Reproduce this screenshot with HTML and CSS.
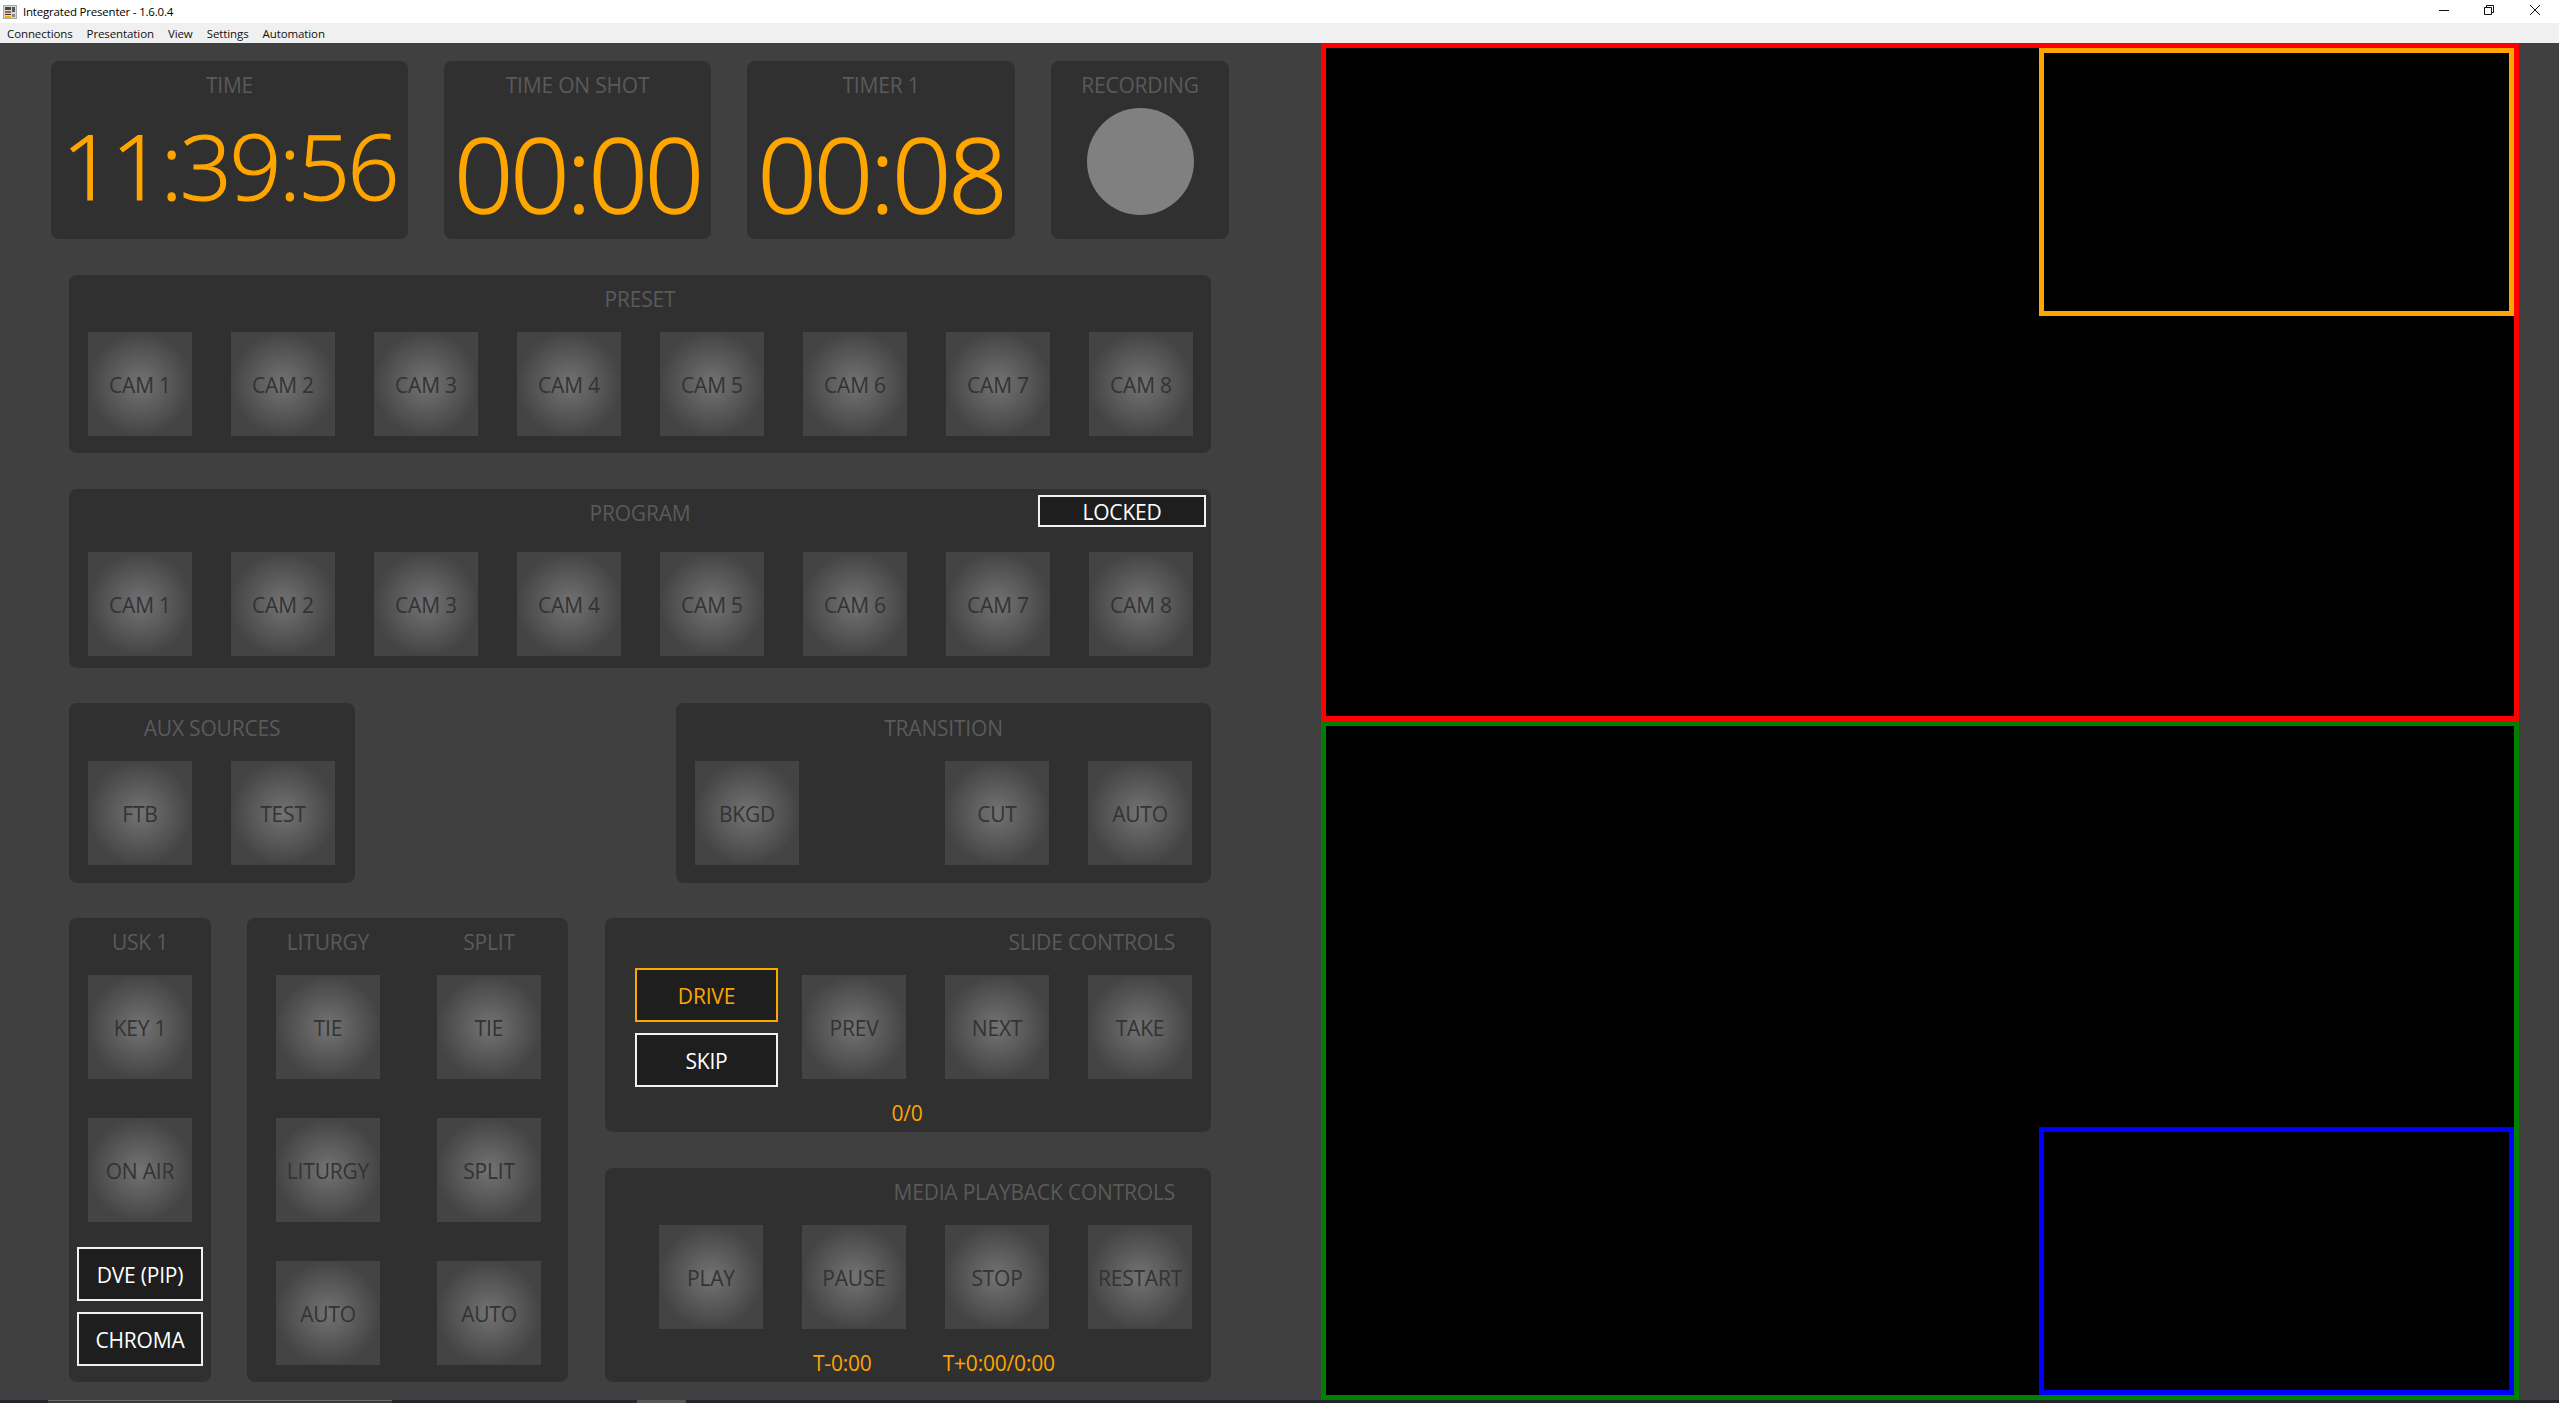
FILE: index.html
```html
<!DOCTYPE html>
<html lang="en">
<head>
<meta charset="utf-8">
<title>Integrated Presenter - 1.6.0.4</title>
<link rel="stylesheet" href="styles.css">
</head>
<body>
<header class="titlebar">
  <svg class="app-icon" width="14" height="14" viewBox="0 0 14 14">
    <rect width="14" height="14" fill="#a8a8a8"/>
    <rect x="1" y="1" width="12" height="12" fill="#d8d8d8"/>
    <rect x="2" y="2" width="6" height="3" fill="#4a4a4a"/>
    <rect x="9" y="2" width="3" height="5" fill="#555"/>
    <rect x="2" y="6" width="6" height="2" fill="#b5533c"/>
    <rect x="2" y="9" width="6" height="1" fill="#333"/>
    <rect x="2" y="11" width="6" height="2" fill="#f0b400"/>
    <rect x="9" y="9" width="3" height="3" fill="#888"/>
  </svg>
  <span class="app-title">Integrated Presenter - 1.6.0.4</span>
  <div class="win-controls">
    <svg width="10" height="10" viewBox="0 0 10 10"><path d="M0 5.5H10" stroke="#111" fill="none"/></svg>
    <svg width="10" height="10" viewBox="0 0 10 10"><path d="M.5 2.5h7v7h-7zM2.5 2.5V.5h7v7h-2" stroke="#111" fill="none"/></svg>
    <svg width="10" height="10" viewBox="0 0 10 10"><path d="M0 0L10 10M10 0L0 10" stroke="#111" fill="none"/></svg>
  </div>
</header>
<nav class="menubar">
  <span>Connections</span><span>Presentation</span><span>View</span><span>Settings</span><span>Automation</span>
</nav>
<main class="main">
  <section class="controls">
    <div class="clocks">
      <div class="panel clock clock-time"><div class="label">TIME</div><div class="digits digits-time">11:39:56</div></div>
      <div class="panel clock clock-shot"><div class="label">TIME ON SHOT</div><div class="digits">00:00</div></div>
      <div class="panel clock clock-timer"><div class="label">TIMER 1</div><div class="digits">00:08</div></div>
      <div class="panel clock clock-rec"><div class="label">RECORDING</div><div class="rec-dot"></div></div>
    </div>

    <div class="panel bus bus-preset">
      <div class="label head">PRESET</div>
      <div class="row">
        <div class="btn">CAM 1</div><div class="btn">CAM 2</div><div class="btn">CAM 3</div><div class="btn">CAM 4</div>
        <div class="btn">CAM 5</div><div class="btn">CAM 6</div><div class="btn">CAM 7</div><div class="btn">CAM 8</div>
      </div>
    </div>

    <div class="panel bus bus-program">
      <div class="label head head-program">PROGRAM</div>
      <div class="toggle locked">LOCKED</div>
      <div class="row">
        <div class="btn">CAM 1</div><div class="btn">CAM 2</div><div class="btn">CAM 3</div><div class="btn">CAM 4</div>
        <div class="btn">CAM 5</div><div class="btn">CAM 6</div><div class="btn">CAM 7</div><div class="btn">CAM 8</div>
      </div>
    </div>

    <div class="mid">
      <div class="panel aux">
        <div class="label head">AUX SOURCES</div>
        <div class="row"><div class="btn">FTB</div><div class="btn">TEST</div></div>
      </div>
      <div class="panel transition">
        <div class="label head">TRANSITION</div>
        <div class="row"><div class="btn bkgd">BKGD</div><div class="btn">CUT</div><div class="btn">AUTO</div></div>
      </div>
    </div>

    <div class="lower">
      <div class="panel usk">
        <div class="label head">USK 1</div>
        <div class="btn">KEY 1</div>
        <div class="btn">ON AIR</div>
        <div class="toggle usk-dve">DVE (PIP)</div>
        <div class="toggle usk-chroma">CHROMA</div>
      </div>
      <div class="panel keys">
        <div class="key-col">
          <div class="label head">LITURGY</div>
          <div class="btn">TIE</div>
          <div class="btn">LITURGY</div>
          <div class="btn">AUTO</div>
        </div>
        <div class="key-col">
          <div class="label head">SPLIT</div>
          <div class="btn">TIE</div>
          <div class="btn">SPLIT</div>
          <div class="btn">AUTO</div>
        </div>
      </div>
      <div class="stack">
        <div class="panel slides">
          <div class="label head-right">SLIDE CONTROLS</div>
          <div class="slides-body">
            <div class="slide-modes">
              <div class="toggle mode drive">DRIVE</div>
              <div class="toggle mode">SKIP</div>
            </div>
            <div class="btn">PREV</div><div class="btn">NEXT</div><div class="btn">TAKE</div>
          </div>
          <div class="readout slide-count">0/0</div>
        </div>
        <div class="panel media">
          <div class="label head-right">MEDIA PLAYBACK CONTROLS</div>
          <div class="media-body">
            <div class="btn">PLAY</div><div class="btn">PAUSE</div><div class="btn">STOP</div><div class="btn">RESTART</div>
          </div>
          <div class="media-times">
            <span class="readout t-minus">T-0:00</span>
            <span class="readout t-plus">T+0:00/0:00</span>
          </div>
        </div>
      </div>
    </div>
  </section>

  <section class="previews">
    <div class="preview preview-red"><div class="pip pip-orange"></div></div>
    <div class="preview preview-green"><div class="pip pip-blue"></div></div>
  </section>
</main>
<footer class="strip">
  <div class="strip-tab"></div>
  <div class="strip-thumb"></div>
</footer>
</body>
</html>
```

FILE: styles.css
```css
* { box-sizing: border-box; }
html, body { margin: 0; height: 100%; }
body {
  width: 2559px;
  height: 1403px;
  overflow: hidden;
  display: flex;
  flex-direction: column;
  background: #404040;
  font-family: "Open Sans", "Noto Sans", sans-serif;
}

/* window chrome */
.titlebar {
  height: 23px;
  background: #fff;
  display: flex;
  align-items: center;
  padding-left: 3px;
  color: #000;
}
.app-icon { margin-right: 6px; }
.app-title { font-size: 11.5px; letter-spacing: -0.2px; }
.win-controls {
  margin-left: auto;
  align-self: flex-start;
  display: flex;
  gap: 35px;
  padding: 5px 19px 0 0;
}
.win-controls svg:last-child { margin-left: 1px; }
.menubar {
  height: 20px;
  background: #f0f0f0;
  display: flex;
  align-items: center;
  gap: 14px;
  padding-left: 7px;
  font-size: 11.5px;
  letter-spacing: -0.1px;
  color: #111;
}

/* main */
.main { height: 1357px; display: flex; }
.controls { width: 1321px; flex: none; }

.panel { background: #303030; border-radius: 8px; }
.label {
  color: #5a5a5a;
  font-size: 21px;
  letter-spacing: -0.2px;
  text-align: center;
  white-space: nowrap;
}

/* clocks */
.clocks { display: flex; gap: 36px; margin: 18px 0 0 51px; }
.clock { height: 178px; padding-top: 7px; display: flex; flex-direction: column; align-items: center; }
.clock .label { line-height: 34px; }
.clock-time { width: 357px; }
.clock-shot { width: 267px; }
.clock-timer { width: 268px; }
.clock-rec { width: 178px; }
.digits {
  color: #ffa500;
  font-weight: 300;
  -webkit-text-stroke: 1.6px #ffa500;
  font-size: 104px;
  line-height: 100px;
  letter-spacing: -3px;
  margin-top: 21px;
  white-space: nowrap;
}
.digits-time { font-size: 91px; letter-spacing: -2.5px; margin-top: 13px; -webkit-text-stroke-width: 1.2px; }
.rec-dot { width: 107px; height: 107px; border-radius: 50%; background: #808080; margin-top: 6px; }

/* shared button */
.btn {
  flex: none;
  width: 104px;
  height: 104px;
  padding-top: 2px;
  display: flex;
  align-items: center;
  justify-content: center;
  background: radial-gradient(circle closest-side, #737373 0%, #444 100%);
  color: #333;
  font-size: 21px;
  letter-spacing: -0.2px;
  white-space: nowrap;
}
.toggle {
  display: flex;
  align-items: center;
  justify-content: center;
  padding-top: 1px;
  background: #1e1e1e;
  border: 2px solid #f0f0f0;
  color: #fff;
  font-size: 21px;
  letter-spacing: -0.2px;
}

/* buses */
.bus { position: relative; margin-left: 69px; width: 1142px; padding: 0 19px; }
.head { line-height: 48px; height: 57px; }
.row { display: flex; gap: 39px; }
.bus-preset { margin-top: 36px; height: 178px; }
.bus-program { margin-top: 36px; height: 179px; }
.head-program { height: 63px; }
.locked { position: absolute; top: 6px; right: 5px; width: 168px; height: 32px; }

/* aux & transition */
.mid { display: flex; justify-content: space-between; margin: 35px 0 0 69px; width: 1142px; }
.aux, .transition { height: 180px; padding: 0 19px; }
.aux { width: 286px; }
.transition { width: 535px; }
.bkgd { margin-right: auto; }
.mid .head { line-height: 50px; height: 58px; }

/* lower */
.lower { display: flex; height: 464px; margin: 35px 0 0 69px; width: 1142px; }
.usk {
  width: 142px;
  display: flex;
  flex-direction: column;
  align-items: center;
}
.usk .head { width: 100%; }
.usk .btn + .btn { margin-top: 39px; }
.usk-dve, .usk-chroma { width: 126px; height: 54px; }
.usk-dve { margin-top: 25px; }
.usk-chroma { margin-top: 11px; }

.keys {
  width: 321px;
  margin-left: 36px;
  padding: 0 28px 0 29px;
  display: flex;
  gap: 57px;
}
.key-col { width: 104px; display: flex; flex-direction: column; }
.key-col .btn + .btn { margin-top: 39px; }

.stack { width: 606px; margin-left: 37px; display: flex; flex-direction: column; justify-content: space-between; }
.head-right { text-align: right; padding-right: 36px; line-height: 48px; height: 57px; }

.slides { height: 214px; position: relative; }
.slides-body { display: flex; gap: 39px; padding-left: 197px; }
.slide-modes {
  position: absolute;
  left: 30px;
  top: 50px;
  display: flex;
  flex-direction: column;
  gap: 11px;
}
.mode { width: 143px; height: 54px; }
.drive { border-color: #ffa500; color: #ffa500; }
.readout { color: #ffa500; font-size: 21px; letter-spacing: -0.2px; }
.slide-count { text-align: center; line-height: 24px; margin: 22px 0 0 -2px; }

.media { height: 214px; }
.media-body { display: flex; gap: 39px; padding-left: 54px; }
.media-times { display: flex; margin-top: 22px; line-height: 24px; }
.t-minus { margin-left: 208px; }
.t-plus { margin-left: 71px; }

/* previews */
.previews { width: 1198px; flex: none; }
.preview {
  background: #000;
  border: 5px solid;
  display: flex;
  justify-content: flex-end;
  align-items: flex-start;
}
.preview-red { height: 678px; border-color: #f00; }
.preview-green { height: 679px; border-color: #008000; align-items: flex-end; }
.pip { width: 475px; height: 268px; border: 5px solid; }
.pip-orange { border-color: #ffa500; }
.pip-blue { border-color: #00f; }

/* bottom strip */
.strip { height: 3px; background: #23262d; display: flex; }
.strip-tab { width: 344px; margin-left: 48px; background: #3a3a3a; border-top: 1px solid #6a6a6a; }
.strip-thumb { width: 49px; margin-left: 245px; background: #555; }
```
